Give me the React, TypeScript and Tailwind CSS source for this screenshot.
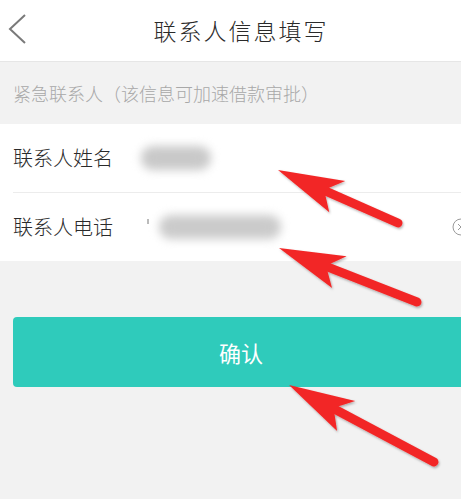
import React from 'react';

type Pt = [number, number];

// red annotation arrow: tip T, tail E
const Arrow: React.FC<{ t: Pt; e: Pt }> = ({ t, e }) => {
  const dx = e[0] - t[0];
  const dy = e[1] - t[1];
  const len = Math.hypot(dx, dy);
  const u: Pt = [dx / len, dy / len];
  const n: Pt = [-u[1], u[0]];
  const at = (a: number, b: number): string =>
    `${t[0] + u[0] * a + n[0] * b},${t[1] + u[1] * a + n[1] * b}`;
  const neck = 54;
  const nx = t[0] + u[0] * neck;
  const ny = t[1] + u[1] * neck;
  return (
    <g>
      <line x1={nx} y1={ny} x2={e[0]} y2={e[1]} stroke="#f22828" strokeWidth={9} strokeLinecap="round" />
      <polygon
        points={[at(0, 0), at(66, -17), at(54, -4.5), at(54, 4.5), at(64, 18)].join(' ')}
        fill="#f22828"
      />
    </g>
  );
};

const App: React.FC = () => {
  return (
    <div className="relative w-[461px] h-[499px] overflow-hidden bg-[#f2f2f2] font-['Noto_Sans_CJK_SC',sans-serif] font-light">
      <div className="w-[482px]">
        {/* Header */}
        <div className="relative h-[62px] bg-white flex items-center justify-center border-b border-[#e6e6e6]">
          <svg className="absolute left-[6px] top-[12px]" width="24" height="36" viewBox="0 0 24 36">
            <polyline points="19,3 4,17 19,31" fill="none" stroke="#7a7a7a" strokeWidth="2" />
          </svg>
          <span className="text-[23px] text-[#2a2a2a] tracking-[2px]">联系人信息填写</span>
        </div>

        {/* Section title */}
        <div className="h-[62px] flex items-center pl-[13px]">
          <span className="text-[18px] text-[#a8a8a8]">紧急联系人（该信息可加速借款审批）</span>
        </div>

        {/* Form rows */}
        <div className="bg-white">
          <div className="h-[69px] flex items-center ml-[13px] border-b border-[#ececec]">
            <span className="w-[128px] text-[20px] text-[#2a2a2a]">联系人姓名</span>
            <div className="w-[70px] h-[24px] rounded-full bg-[#c9c9c9] blur-[5px]" />
          </div>
          <div className="h-[68px] flex items-center pl-[13px] pr-[12px]">
            <span className="w-[128px] text-[20px] text-[#2a2a2a]">联系人电话</span>
            <span className="w-[2px] h-[5px] bg-[#bbb] -mt-[12px] ml-[6px]" />
            <div className="w-[122px] h-[24px] rounded-full bg-[#cbcbcb] blur-[5px] ml-[10px]" />
            <svg className="ml-auto" width="18" height="18" viewBox="0 0 18 18">
              <circle cx="9" cy="9" r="8" fill="none" stroke="#9a9a9a" strokeWidth="1" />
              <path d="M6 6 L12 12 M12 6 L6 12" stroke="#9a9a9a" strokeWidth="1" />
            </svg>
          </div>
        </div>

        {/* Confirm button */}
        <div className="px-[13px] pt-[56px]">
          <button className="w-full h-[70px] rounded-[4px] bg-[#2fcbbb] text-white text-[22px] font-normal flex items-center justify-center">
            确认
          </button>
        </div>
      </div>

      {/* Annotation arrows */}
      <svg className="absolute inset-0 pointer-events-none" width="461" height="499" viewBox="0 0 461 499">
        <defs>
          <filter id="sh" x="-10%" y="-10%" width="120%" height="130%">
            <feDropShadow dx="1" dy="1.5" stdDeviation="1.2" floodColor="#000" floodOpacity="0.3" />
          </filter>
        </defs>
        <g filter="url(#sh)">
          <Arrow t={[278, 170]} e={[398, 223]} />
          <Arrow t={[279, 248]} e={[417, 302]} />
          <Arrow t={[289, 385]} e={[434, 462]} />
        </g>
      </svg>
    </div>
  );
};

export default App;
